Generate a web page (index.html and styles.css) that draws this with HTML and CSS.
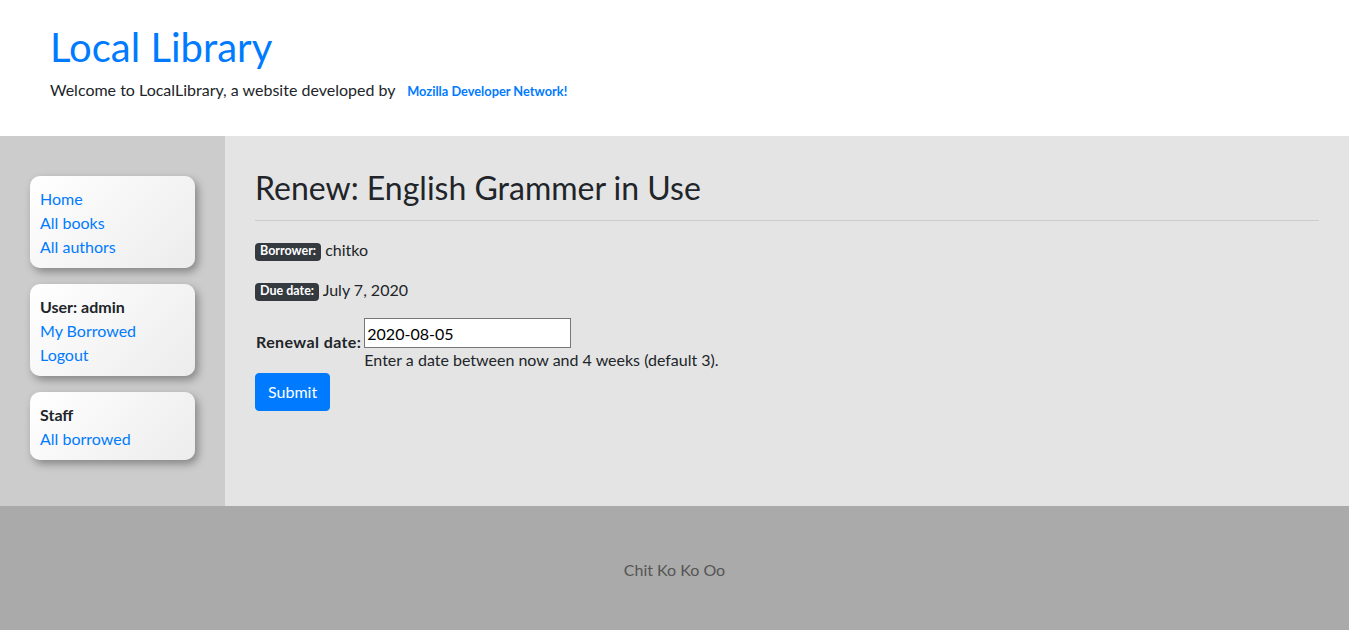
FILE: index.html
```html
<!DOCTYPE html>
<html lang="en">
<head>
<meta charset="utf-8">
<title>Local Library</title>
<link rel="stylesheet" href="styles.css">
</head>
<body>
<header class="site-header">
  <h1 class="site-title">Local Library</h1>
  <p class="site-intro">Welcome to LocalLibrary, a website developed by <a class="mdn-link" href="#">Mozilla Developer Network!</a></p>
</header>
<div class="page">
  <aside class="sidebar">
    <ul class="side-card">
      <li><a href="#">Home</a></li>
      <li><a href="#">All books</a></li>
      <li><a href="#">All authors</a></li>
    </ul>
    <ul class="side-card">
      <li class="side-head">User: admin</li>
      <li><a href="#">My Borrowed</a></li>
      <li><a href="#">Logout</a></li>
    </ul>
    <ul class="side-card">
      <li class="side-head">Staff</li>
      <li><a href="#">All borrowed</a></li>
    </ul>
  </aside>
  <main class="content">
    <h2 class="page-title">Renew: English Grammer in Use</h2>
    <hr class="rule">
    <p class="info"><span class="badge">Borrower:</span> chitko</p>
    <p class="info"><span class="badge">Due date:</span> July 7, 2020</p>
    <form class="renew-form">
      <table class="form-table">
        <tr>
          <th class="form-label-cell"><label class="form-label" for="renewal">Renewal date:</label></th>
          <td class="form-field-cell"><input class="date-input" id="renewal" type="text" value="2020-08-05"><br><span class="helptext">Enter a date between now and 4 weeks (default 3).</span></td>
        </tr>
      </table>
      <button class="btn-submit" type="button">Submit</button>
    </form>
  </main>
</div>
<footer class="site-footer">Chit Ko Ko Oo</footer>
</body>
</html>
```
FILE: styles.css
```css
* { box-sizing: border-box; }
body {
  margin: 0;
  font-family: Lato, "Liberation Sans", sans-serif;
  font-size: 16px;
  line-height: 1.5;
  color: #212529;
  background: #fff;
}
a { color: #007bff; text-decoration: none; }

.site-header {
  height: 136px;
  padding: 23px 50px 0;
  background: #fff;
}
.site-title {
  margin: 0 0 7px;
  font-size: 40px;
  line-height: 1.2;
  font-weight: 400;
  color: #007bff;
}
.site-intro { margin: 0; }
.mdn-link {
  font-size: 12.8px;
  font-weight: 700;
  margin-left: 8px;
}

.page {
  display: flex;
  min-height: 370px;
}
.sidebar {
  width: 225px;
  flex: none;
  background: #ccc;
  padding: 40px 30px;
  display: flex;
  flex-direction: column;
  gap: 16px;
}
.side-card {
  list-style: none;
  margin: 0;
  width: 165px;
  padding: 11px 10px 9px;
  border-radius: 10px;
  background: linear-gradient(135deg, #fff 0%, #ececec 100%);
  box-shadow: 3px 4px 8px rgba(0,0,0,.35);
}
.side-head { font-weight: 700; }

.content {
  flex: 1;
  background: #e4e4e4;
  padding: 33px 30px 20px;
}
.page-title {
  margin: 0;
  font-size: 32px;
  line-height: 1.2;
  font-weight: 400;
}
.rule {
  margin: 13px 0 17px;
  border: 0;
  border-top: 1px solid rgba(0,0,0,.1);
}
.info { margin: 0 0 16px; }
.badge {
  display: inline-block;
  padding: 2px 5px 3px;
  font-size: 12.5px;
  font-weight: 700;
  line-height: 1;
  color: #fff;
  background: #343a40;
  border-radius: 4px;
  vertical-align: 1px;
}
.renew-form { margin: 0; }
.form-table { border-collapse: separate; border-spacing: 0; }
.form-label-cell {
  padding: 1px 2px 1px 1px;
  text-align: left;
  vertical-align: middle;
  font-weight: 700;
}
.form-label { display: inline-block; margin-bottom: 8px; letter-spacing: .4px; }
.form-field-cell { padding: 0 1px 1px; }
.date-input {
  width: 207px;
  height: 30px;
  margin: 0;
  padding: 1px 2px;
  border: 1px solid #767676;
  font: inherit;
  color: #000;
  background: #fff;
  border-radius: 0;
}
.helptext { color: #212529; }
.btn-submit {
  display: inline-block;
  margin: 0;
  padding: 6px 12px;
  font: inherit;
  line-height: 1.5;
  color: #fff;
  background: #007bff;
  border: 1px solid #007bff;
  border-radius: 4px;
}

.site-footer {
  height: 124px;
  padding-top: 52px;
  background: #aaa;
  color: #555;
  text-align: center;
}
```
